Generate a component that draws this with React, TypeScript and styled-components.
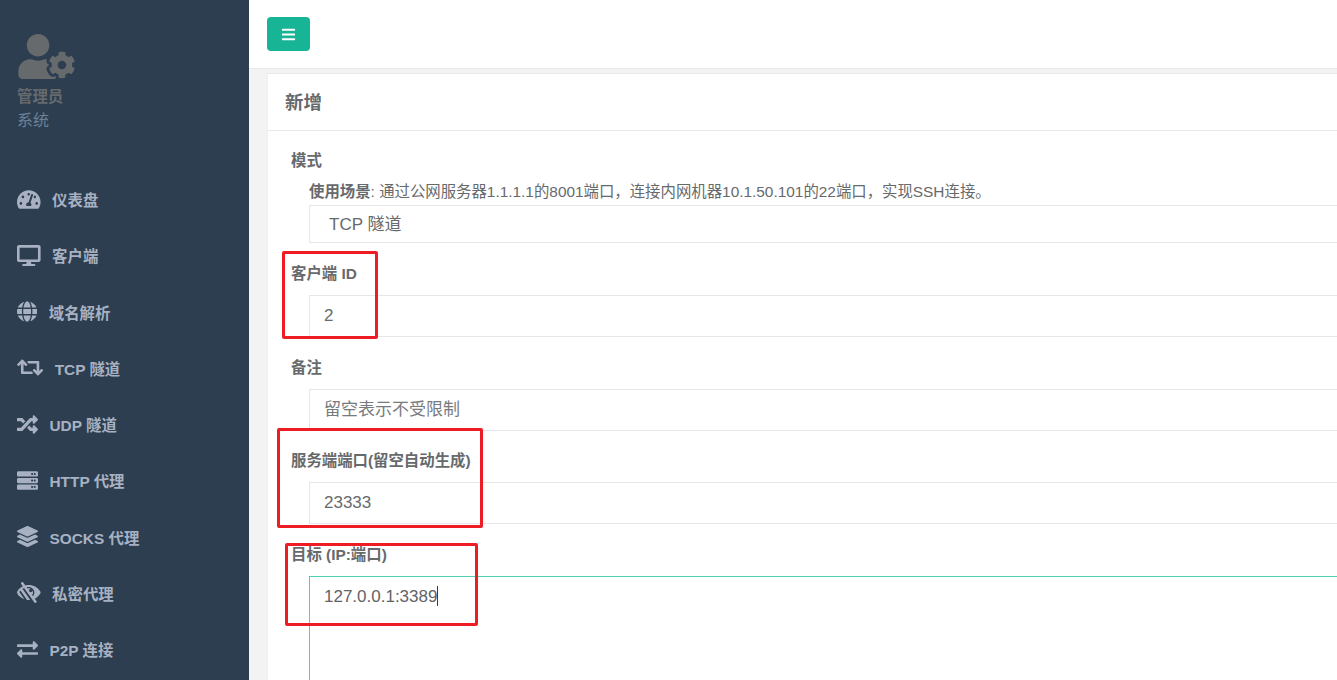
import React from 'react';
import styled, { createGlobalStyle } from 'styled-components';
import {
  FaBars,
  FaDesktop,
  FaExchangeAlt,
  FaGlobe,
  FaLayerGroup,
  FaLowVision,
  FaRandom,
  FaRetweet,
  FaServer,
  FaTachometerAlt,
  FaUserCog,
} from 'react-icons/fa';

const GlobalStyle = createGlobalStyle`
  html, body {
    margin: 0;
    height: 100%;
    overflow: hidden;
  }
  body {
    font-family: "Liberation Sans", "Noto Sans CJK SC", sans-serif;
    color: #676a6c;
  }
`;

// iconWidth: the icons are wider or narrower than their 21px height
const navItems = [
  { icon: FaTachometerAlt, iconWidth: 23.6, label: '仪表盘' },
  { icon: FaDesktop, iconWidth: 23.6, label: '客户端' },
  { icon: FaGlobe, iconWidth: 20.3, label: '域名解析' },
  { icon: FaRetweet, iconWidth: 26.2, label: 'TCP 隧道' },
  { icon: FaRandom, iconWidth: 21, label: 'UDP 隧道' },
  { icon: FaServer, iconWidth: 21, label: 'HTTP 代理' },
  { icon: FaLayerGroup, iconWidth: 21, label: 'SOCKS 代理' },
  { icon: FaLowVision, iconWidth: 23.6, label: '私密代理' },
  { icon: FaExchangeAlt, iconWidth: 21, label: 'P2P 连接' },
];

const App = () => {
  return (
    <Page>
      <GlobalStyle />
      <Sidebar>
        <Profile>
          <FaUserCog />
          <ProfileName>管理员</ProfileName>
          <ProfileRole>系统</ProfileRole>
        </Profile>
        <Nav>
          {navItems.map(item => (
            <NavItem key={item.label} $iconWidth={item.iconWidth}>
              <item.icon />
              <span>{item.label}</span>
            </NavItem>
          ))}
        </Nav>
      </Sidebar>
      <Main>
        <TopBar>
          <MenuButton>
            <FaBars size={15} />
          </MenuButton>
        </TopBar>
        <Card>
          <CardTitle>新增</CardTitle>
          <CardBody>
            <Label>模式</Label>
            <Help>
              <b>使用场景</b>: 通过公网服务器1.1.1.1的8001端口，连接内网机器10.1.50.101的22端口，实现SSH连接。
            </Help>
            <Select defaultValue="tcp">
              <option value="tcp">TCP 隧道</option>
            </Select>
            <Label>客户端 ID</Label>
            <Input defaultValue="2" />
            <Label>备注</Label>
            <Input placeholder="留空表示不受限制" />
            <Label>服务端端口(留空自动生成)</Label>
            <Input defaultValue="23333" />
            <Label>目标 (IP:端口)</Label>
            <TargetArea>
              127.0.0.1:3389
              <Caret />
            </TargetArea>
          </CardBody>
        </Card>
      </Main>
      <Mark $x={282} $y={251} $w={96} $h={88} />
      <Mark $x={277} $y={428} $w={206} $h={100} />
      <Mark $x={285} $y={543} $w={193} $h={83} />
    </Page>
  );
};

export default App;

const Page = styled('div')`
  position: relative;
  display: flex;
  width: 1337px;
  height: 680px;
  overflow: hidden;
  background: #f3f3f4;
`;

const Sidebar = styled('aside')`
  flex: none;
  width: 249px;
  background: #2c3e50;
`;

const Profile = styled('div')`
  display: flex;
  flex-direction: column;
  align-items: flex-start;
  padding: 34px 0 0 17px;
  height: 132px;
  box-sizing: border-box;
  color: #676a6c;

  svg {
    width: 59px;
    height: 47px;
  }
`;

const ProfileName = styled('strong')`
  margin-top: 7px;
  font-size: 15.4px;
  line-height: 22px;
`;

const ProfileRole = styled('span')`
  margin-top: 2px;
  font-size: 16px;
  line-height: 22px;
  color: #6c8299;
`;

const Nav = styled('nav')`
  display: flex;
  flex-direction: column;
  padding-top: 39px;
`;

const NavItem = styled('a')<{ $iconWidth: number }>`
  display: flex;
  align-items: center;
  gap: 11.5px;
  height: 56.25px;
  padding-left: 17px;
  color: #a7b1c2;
  font-size: 15.4px;
  font-weight: 700;

  svg {
    flex: none;
    width: ${props => props.$iconWidth}px;
    height: 21px;
  }
`;

const Main = styled('main')`
  flex: 1;
  min-width: 0;
`;

const TopBar = styled('header')`
  height: 69px;
  padding: 17px 0 0 18px;
  box-sizing: border-box;
  background: #fff;
  border-bottom: 1px solid #e7eaec;
`;

const MenuButton = styled('button')`
  display: flex;
  align-items: center;
  justify-content: center;
  width: 43px;
  height: 34px;
  padding: 0;
  border: none;
  border-radius: 4px;
  background: #17b595;
  color: #fff;
`;

const Card = styled('section')`
  width: 1200px;
  height: 700px;
  margin: 4px 0 0 18px;
  background: #fff;
  border-top: 1px solid #e7eaec;
  border-left: 1px solid #eef0f1;
  box-sizing: border-box;
`;

const CardTitle = styled('h2')`
  height: 57px;
  margin: 0;
  padding-left: 17px;
  box-sizing: border-box;
  border-bottom: 1px solid #e7eaec;
  font-size: 18.5px;
  font-weight: 700;
  line-height: 58px;
  color: #676a6c;
`;

const CardBody = styled('div')`
  padding: 20px 0 0 23px;
`;

const Label = styled('label')`
  display: block;
  height: 20px;
  margin-bottom: 11px;
  font-size: 15.4px;
  font-weight: 700;
  line-height: 20px;
`;

const Help = styled('div')`
  height: 20px;
  margin: 0 0 3px 18px;
  font-size: 15.4px;
  line-height: 20px;
  white-space: nowrap;
`;

const Select = styled('select')`
  display: block;
  box-sizing: border-box;
  width: 1100px;
  height: 38px;
  margin: 0 0 21px 18px;
  padding: 0 19px;
  appearance: none;
  background: #fff;
  border: 1px solid #e5e6e7;
  outline: none;
  font-family: inherit;
  font-size: 17px;
  color: #676a6c;
`;

const Input = styled('input')`
  display: block;
  box-sizing: border-box;
  width: 1100px;
  height: 42px;
  margin: 0 0 20.7px 18px;
  padding: 0 14px;
  background: #fff;
  border: 1px solid #e5e6e7;
  outline: none;
  font-family: inherit;
  font-size: 17px;
  color: #676a6c;

  &::placeholder {
    color: #777b7e;
    opacity: 1;
  }
`;

const TargetArea = styled('div')`
  box-sizing: border-box;
  width: 1100px;
  height: 200px;
  margin-left: 18px;
  padding: 8px 14px;
  background: #fff;
  border: 1px solid #4fcfb4;
  font-size: 17px;
  line-height: 24px;
  color: #5f6366;
`;

const Caret = styled('span')`
  display: inline-block;
  width: 1px;
  height: 20px;
  vertical-align: -4px;
  background: #2c3e50;
`;

const Mark = styled('div')<{ $x: number; $y: number; $w: number; $h: number }>`
  position: absolute;
  left: ${props => props.$x}px;
  top: ${props => props.$y}px;
  width: ${props => props.$w}px;
  height: ${props => props.$h}px;
  box-sizing: border-box;
  border: 3px solid #ee1c25;
  border-radius: 2px;
`;
